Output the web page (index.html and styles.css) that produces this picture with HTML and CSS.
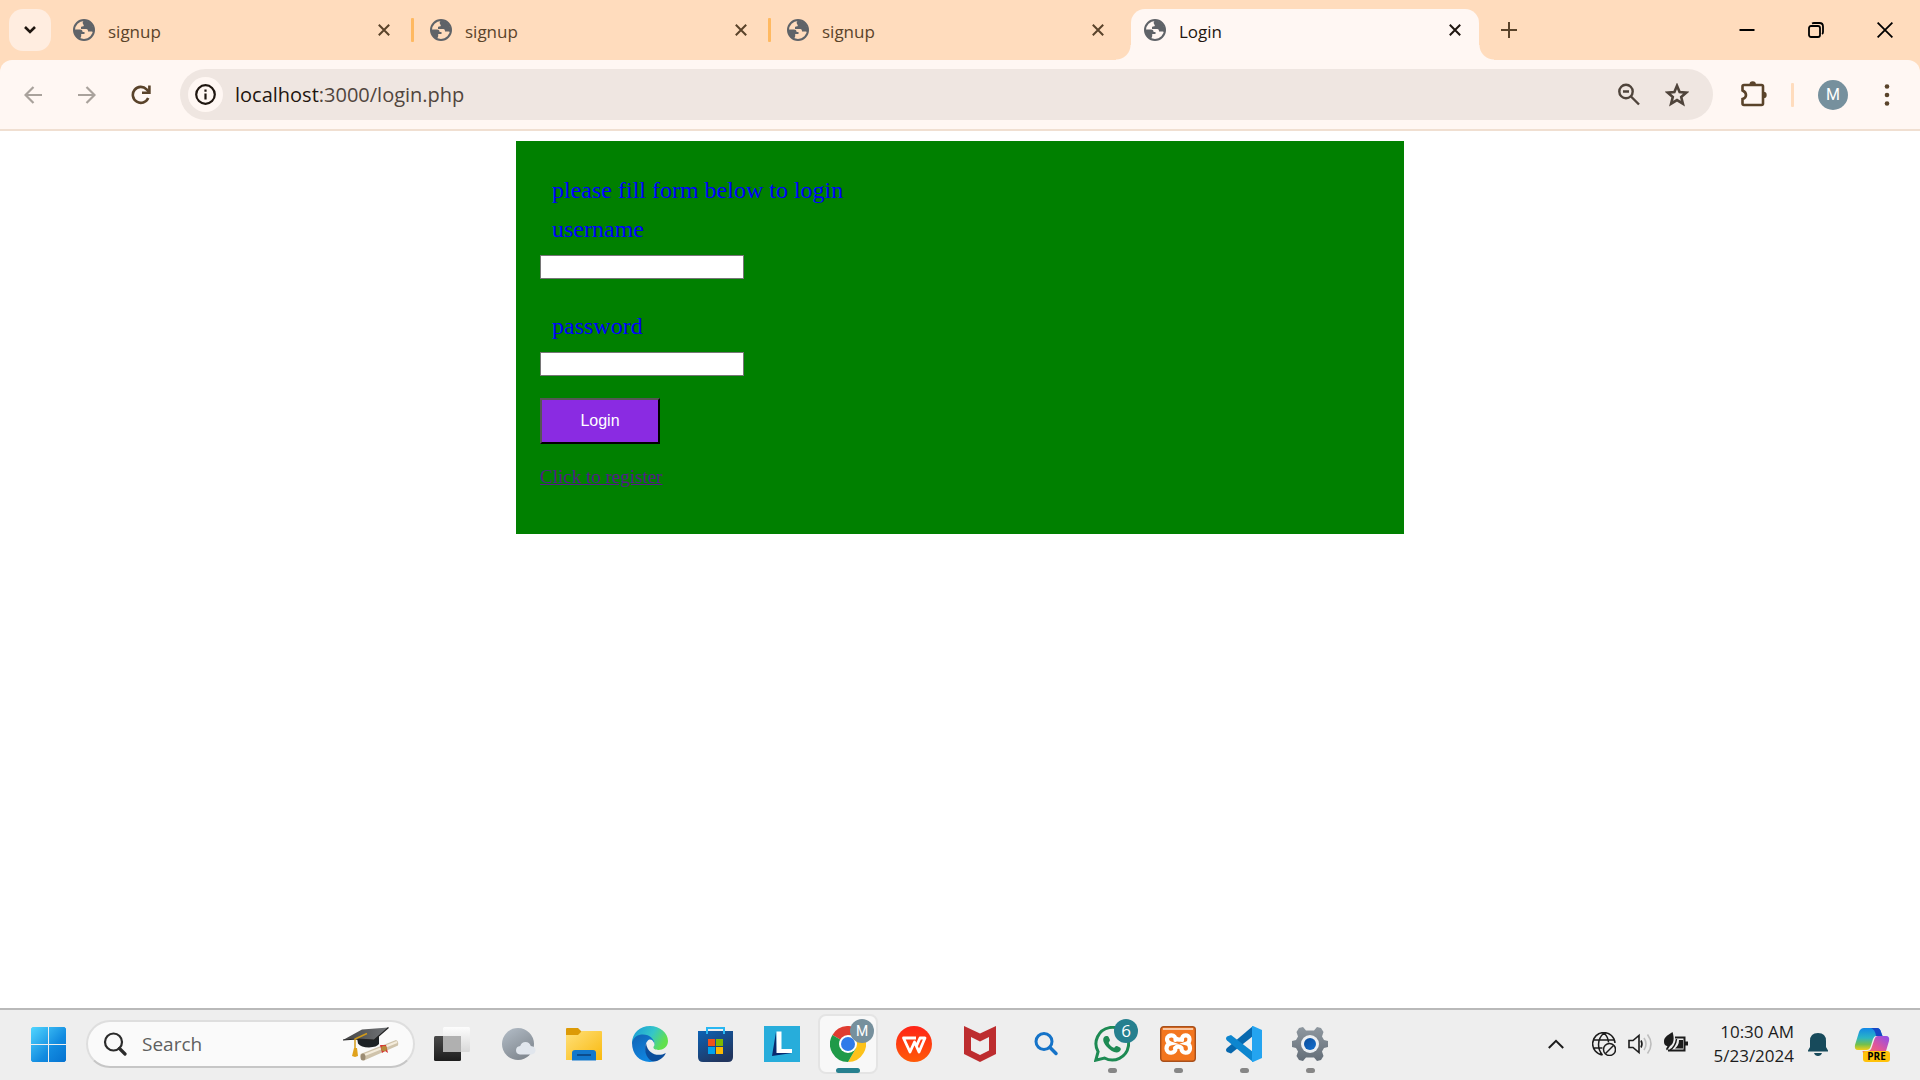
FILE: index.html
```html
<!DOCTYPE html>
<html lang="en">
<head>
<meta charset="utf-8">
<title>Login</title>
<link rel="stylesheet" href="styles.css">
</head>
<body>
<svg width="0" height="0" class="defs" aria-hidden="true">
  <symbol id="globe" viewBox="0 0 22 22">
    <circle cx="11" cy="11" r="10" fill="none" stroke="#5f6368" stroke-width="2"/>
    <path fill="#5f6368" d="M11 1.500c-1 1-1.500 1.500-1.200 3 .2 1 1 1.200 1 2.200 0 1-2.800.3-2.800 1.800v1.600h5.200c1.500 0 1.800 1.400 1.800 2.400h3.500c1 0 1.600.6 1.900 1.300A10 10 0 0 0 11 1.500zM1.500 10.500h5.500c2 0 2.600 1.300 2.600 2.600h1.900v2H8.200v2.100l-1.200 3C3.500 18.500 1.500 15 1.500 10.500z"/>
  </symbol>
  <symbol id="cross" viewBox="0 0 12 12"><path d="M.8.8l10.400 10.400M11.200.8L.8 11.200" stroke="currentColor" stroke-width="2" fill="none"/></symbol>
</svg>

<header class="browser">
  <div class="tabstrip">
    <button class="tab-search" aria-label="Search tabs"><svg width="14" height="10" viewBox="0 0 14 10"><path d="M2 2l5 5 5-5" fill="none" stroke="#1f1610" stroke-width="2.600"/></svg></button>
    <div class="tab">
      <svg class="favicon"><use href="#globe"/></svg><span class="tab-title">signup</span>
      <button class="tab-close" aria-label="Close"><svg width="12" height="12"><use href="#cross"/></svg></button>
    </div>
    <span class="tab-line"></span>
    <div class="tab">
      <svg class="favicon"><use href="#globe"/></svg><span class="tab-title">signup</span>
      <button class="tab-close" aria-label="Close"><svg width="12" height="12"><use href="#cross"/></svg></button>
    </div>
    <span class="tab-line"></span>
    <div class="tab">
      <svg class="favicon"><use href="#globe"/></svg><span class="tab-title">signup</span>
      <button class="tab-close" aria-label="Close"><svg width="12" height="12"><use href="#cross"/></svg></button>
    </div>
    <span class="tab-line hidden"></span>
    <div class="tab active">
      <svg class="favicon"><use href="#globe"/></svg><span class="tab-title">Login</span>
      <button class="tab-close" aria-label="Close"><svg width="12" height="12"><use href="#cross"/></svg></button>
    </div>
    <button class="new-tab" aria-label="New tab"><svg width="16" height="16"><path d="M8 0v16M0 8h16" stroke="#5a432a" stroke-width="2"/></svg></button>
    <div class="window-controls">
      <button aria-label="Minimize"><svg width="16" height="16"><path d="M.5 8h15" stroke="#000" stroke-width="2"/></svg></button>
      <button aria-label="Restore"><svg width="16" height="16" fill="none" stroke="#000" stroke-width="1.800"><rect x="1" y="4" width="11" height="11" rx="2"/><path d="M4 1.500Q5 1 6 1h5.500Q15 1 15 4.500V10q0 1.500-1 2"/></svg></button>
      <button aria-label="Close window"><svg width="16" height="16"><path d="M.6.600l14.800 14.800M15.400.600L.6 15.400" stroke="#000" stroke-width="1.800"/></svg></button>
    </div>
  </div>

  <div class="toolbar-back">
  <div class="toolbar">
    <button class="nav" aria-label="Back"><svg width="18" height="18" fill="none" stroke="#a9a29c" stroke-width="2.200"><path d="M18 9H2M9.500 1L1.500 9l8 8"/></svg></button>
    <button class="nav" aria-label="Forward"><svg width="18" height="18" fill="none" stroke="#a9a29c" stroke-width="2.200"><path d="M0 9h16M8.500 1l8 8-8 8"/></svg></button>
    <button class="nav" aria-label="Reload"><svg width="20" height="20" fill="none" stroke="#5a432a" stroke-width="2.600"><path d="M17.200 13a8 8 0 1 1-1.600-8.700L18 7"/><path d="M18.400.500V7.700H11"/></svg></button>
    <div class="omnibox">
      <button class="site-info" aria-label="Site information"><svg width="22" height="22"><circle cx="10.500" cy="10.500" r="9.300" fill="none" stroke="#1f1610" stroke-width="2.200"/><path d="M10.500 9.500v6M10.500 5.500v2.200" stroke="#1f1610" stroke-width="2.200"/></svg></button>
      <span class="url">localhost<span class="url-path">:3000/login.php</span></span>
      <button aria-label="Zoom"><svg width="24" height="24" fill="none" stroke="#4f443b" stroke-width="2.400"><circle cx="9" cy="8.500" r="6.700"/><path d="M14 13.500l8 8M6 8.500h6"/></svg></button>
      <button aria-label="Bookmark"><svg width="24" height="24" fill="none" stroke="#4f443b" stroke-width="2.600"><path d="M12 2.800l2.600 6.300 6.800.5-5.200 4.400 1.700 6.700-5.900-3.600-5.900 3.600L7.800 14 2.600 9.600l6.800-.5z"/></svg></button>
    </div>
    <button class="extensions" aria-label="Extensions"><svg width="28" height="28"><path d="M4 4h17.500q1.500 0 1.500 1.500v17q0 1.500-1.500 1.500H4q-1.500 0-1.500-1.500V18q3.500-1 3.500-4T2.500 9.500v-4Q2.500 4 4 4z" fill="none" stroke="#5a432a" stroke-width="2.600"/><path d="M9.500 3.500a3.200 3.200 0 0 1 6.400 0zM23.500 10.800a3.200 3.200 0 0 1 0 6.400z" fill="#5a432a"/></svg></button>
    <span class="toolbar-line"></span>
    <button class="avatar" aria-label="Profile">M</button>
    <button class="menu" aria-label="Menu"><svg width="24" height="24" fill="#5a432a"><circle cx="12" cy="3.500" r="2.300"/><circle cx="12" cy="12" r="2.300"/><circle cx="12" cy="20.500" r="2.300"/></svg></button>
  </div>
  </div>
</header>

<main class="page">
  <form class="login">
    <p class="lead">please fill form below to login</p>
    <label class="lead" for="username">username</label>
    <input class="field" id="username" type="text">
    <label class="lead second" for="password">password</label>
    <input class="field" id="password" type="password">
    <button class="submit" type="button">Login</button>
    <a class="register" href="#">Click to register</a>
  </form>
</main>

<footer class="taskbar">
  <button class="start" aria-label="Start"><svg width="35" height="35"><defs><linearGradient id="win" gradientUnits="userSpaceOnUse" x1="0" y1="0" x2="35" y2="35"><stop offset="0" stop-color="#51d6ff"/><stop offset=".6" stop-color="#128be0"/><stop offset="1" stop-color="#0572d0"/></linearGradient></defs><path fill="url(#win)" d="M1.500 0H17v17H0V1.500zM18 0h15.500L35 1.500V17H18zM0 18h17v17H1.500L0 33.500zM18 18h17v15.500L33.500 35H18z"/></svg></button>
  <div class="search">
    <svg width="24" height="24" fill="none" stroke="#2b2b2b"><circle cx="10.500" cy="10" r="8.500" stroke-width="2.200"/><path d="M16.500 16.500l5.500 5.500" stroke-width="3.200" stroke-linecap="round"/></svg>
    <input class="search-box" type="text" aria-label="Search" placeholder="Search">
    <svg width="56" height="36" viewBox="0 0 56 36"><defs><linearGradient id="cap" x1="0" y1="0" x2="1" y2="0"><stop offset="0" stop-color="#444"/><stop offset="1" stop-color="#73767a"/></linearGradient></defs>
      <path fill="#1d2226" d="M14 12l22-4v10q-2 3-10 3.500-8 0-11-4z"/><path fill="url(#cap)" d="M0 14L19 3.500 45.500 1.500 31 14 14 13z"/><path d="M0 14l14-1 17 1.200L45.500 1.500" fill="none" stroke="#222" stroke-width="1.200"/><path d="M24 7.500L12 13v11" fill="none" stroke="#d39b18" stroke-width="1.500"/><path d="M11 22h3l1 8-3 1-3-1z" fill="#e0a21c"/>
      <path d="M17.500 28L53 14q3 1 2 5.500L21 34.500q-4-1-3.500-6.500z" fill="#cfc3ab"/><path d="M19 30l35-14" stroke="#f4ecdc" stroke-width="2"/><ellipse cx="20" cy="31" rx="2.500" ry="3.500" fill="#9b8c74"/><path d="M37 19l6 0 2 8-3-2-3 2z" fill="#d63535"/><circle cx="41" cy="22.500" r="2.800" fill="#b58a3a"/></svg>
  </div>
  <nav class="apps">
    <button class="app" aria-label="Task view"><svg width="36" height="36"><defs><linearGradient id="tv" x1="0" y1="0" x2="0" y2="1"><stop offset="0" stop-color="#4a4a4a"/><stop offset="1" stop-color="#1d1d1d"/></linearGradient><linearGradient id="tw" x1="0" y1="0" x2="0" y2="1"><stop offset="0" stop-color="#fdfdfd"/><stop offset="1" stop-color="#d8d8d8"/></linearGradient></defs><rect x="0" y="10" width="27" height="25" rx="1.500" fill="url(#tv)"/><rect x="9" y="1" width="27" height="25" rx="1.500" fill="url(#tw)"/><path d="M9 10h18v16H9z" fill="#b0b0b0"/></svg></button>
    <button class="app" aria-label="Weather"><svg width="36" height="36"><defs><linearGradient id="wt" x1="0" y1="0" x2=".6" y2="1"><stop offset="0" stop-color="#b4bec8"/><stop offset="1" stop-color="#818890"/></linearGradient></defs><circle cx="18" cy="18" r="16" fill="url(#wt)"/><path d="M20 28.500q-4-.5-4-4.200t4.200-4.300q1.300-4 5.300-4 4 .2 5.300 4 4.700.3 4.700 4.300t-4.500 4.200z" fill="#e1e6ed"/></svg></button>
    <button class="app" aria-label="File Explorer"><svg width="36" height="36"><defs><linearGradient id="fd" x1="0" y1="0" x2="1" y2="1"><stop offset="0" stop-color="#ffe07a"/><stop offset="1" stop-color="#f9b90e"/></linearGradient></defs><path d="M0 3q0-1 1-1h11l4 4H36v6H0z" fill="#dc9a06"/><path d="M0 9h12l4-4h19q1 0 1 1v28H0z" fill="url(#fd)"/><path d="M6 34.500V27q0-3 3-3h18q3 0 3 3v7.500z" fill="#1378cc"/><path d="M11 29h14" stroke="#0c4c8c" stroke-width="2"/></svg></button>
    <button class="app" aria-label="Edge"><svg width="36" height="36"><defs><linearGradient id="e1" x1="0" y1="0" x2="1" y2=".4"><stop offset=".1" stop-color="#1b9fd8"/><stop offset=".6" stop-color="#35c6c8"/><stop offset="1" stop-color="#62e04e"/></linearGradient><linearGradient id="e2" x1="0" y1="0" x2=".5" y2="1"><stop offset="0" stop-color="#1162b4"/><stop offset="1" stop-color="#0f86e0"/></linearGradient></defs><path d="M0 17C0 7 8 0 18 0s18 7 18 15c0 6-5 9-9.500 9-4 0-5.500-1.800-5-3.200C24 18 22 13 17 13z" fill="url(#e1)"/><path d="M0 17c1-6 6-8.500 11-8.500 7 0 12 5 11.500 10.500C22 14 18 12 15.500 15 11 20 14 32 22 35.500 10 38 0 30 0 17z" fill="url(#e2)"/><path d="M14 17c-3 9 2 18 8 18.600 5-.6 10-4 11.800-8.600-7 4-18 2-19.800-10z" fill="#0c4e9c"/></svg></button>
    <button class="app" aria-label="Store"><svg width="36" height="36"><defs><linearGradient id="st" x1="0" y1="0" x2=".6" y2="1"><stop offset="0" stop-color="#0c62b5"/><stop offset="1" stop-color="#21355e"/></linearGradient></defs><path d="M0 5h35v26q0 5-5 5H5q-5 0-5-5z" fill="url(#st)"/><path d="M9 8V2h17v6" fill="none" stroke="#29b7f2" stroke-width="2"/><path fill="#f1511b" d="M10 13h7v7h-7z"/><path fill="#80b900" d="M18 13h7v7h-7z"/><path fill="#00a3ee" d="M10 21h7v7h-7z"/><path fill="#fdb900" d="M18 21h7v7h-7z"/></svg></button>
    <button class="app" aria-label="L app"><svg width="36" height="36"><path fill="#27addb" d="M0 0h36v36H0z"/><path fill="#0a2a6e" d="M12 6L8 30l20-3-15-4z"/><path fill="#fff" d="M12.500 5.500h5V23H28v4H12.500z"/></svg></button>
    <button class="app current" aria-label="Chrome"><svg width="36" height="36"><path d="M18 18L2.400 9A18 18 0 0 1 33.600 9z" fill="#e03c31"/><path d="M18 9h15.600A18 18 0 0 1 18 36l7.800-13.500z" fill="#fcc21b"/><path d="M18 18L2.400 9A18 18 0 0 0 18 36l7.800-13.500z" fill="#1f9a48"/><circle cx="18" cy="18" r="9" fill="#fff"/><circle cx="18" cy="18" r="7" fill="#2f7bea"/></svg><span class="badge gray">M</span><i class="mark wide"></i></button>
    <button class="app" aria-label="WPS Office"><svg width="36" height="36"><defs><linearGradient id="wp" x1="0" y1="0" x2="0" y2="1"><stop offset="0" stop-color="#ff2418"/><stop offset="1" stop-color="#ff5a08"/></linearGradient></defs><circle cx="18" cy="18" r="18" fill="url(#wp)"/><path d="M20 12H7.500L14 26l4.500-10L23 26l6-14h-5l-3.500 8" fill="none" stroke="#fff" stroke-width="2.800" stroke-linejoin="round"/></svg></button>
    <button class="app" aria-label="McAfee"><svg width="36" height="36"><path fill="#bd2d2f" fill-rule="evenodd" d="M2 0l16 7.500L34 0v28l-16 8-16-8zM9 11v13.500l9 4.500 9-4.500V11l-9 4.500z"/></svg></button>
    <button class="app" aria-label="Finder"><svg width="36" height="36" fill="none" stroke="#1573c8"><circle cx="16" cy="15.500" r="8" stroke-width="3"/><path d="M22 21.500l6 6" stroke-width="3.500" stroke-linecap="round"/></svg></button>
    <button class="app" aria-label="WhatsApp"><svg width="36" height="36"><path d="M1.800 34.200l2.300-8.500A16.300 16.300 0 1 1 10.500 32z" fill="none" stroke="#1d8a53" stroke-width="3"/><path d="M12 10c-4 1-3.500 6 .5 10.500S22 28 25.500 25.500c2-1.500 1.500-3.500 0-4.200l-2.500-1.200c-1.500-.5-2 1.400-3 1.700-2-.4-5-3.300-5.300-5 .2-1 1.600-1.800 1.200-3l-1.400-3c-.4-1-1.600-1-2.500-.8z" fill="#1d8a53"/></svg><span class="badge">6</span><i class="mark"></i></button>
    <button class="app" aria-label="XAMPP"><svg width="36" height="36"><rect x=".7" y=".7" width="34.600" height="34.600" rx="3" fill="#f3761f" stroke="#a9501b" stroke-width="1.400"/><path d="M3 2h30v2H3z" fill="#f9c7a2"/><path d="M15.500 14c1-6-8.500-6-8.500-1 0 3 2 4 3.500 4.500C8 18 6.500 20 6.500 22.500c0 6 9.500 5.500 9-.5M22 14c-1-6 7.500-6 7.500-1 0 3-1 4-2.500 4.500C29 18 30 20 30 22.500c0 6-9 5.500-8.500-.5M15 22q3.500-3 6.500 0M16 12.500q3 2 5 .5" fill="none" stroke="#fff" stroke-width="4.200" stroke-linecap="round"/></svg><i class="mark"></i></button>
    <button class="app" aria-label="VS Code"><svg width="36" height="36"><path d="M27 0v10L5 27.500 1 26q-2-2 0-4z" fill="#0768ae"/><path d="M5 9L27 26v10L1 14.500q-2-2 0-4z" fill="#0d86cf"/><path d="M26 0l1 0 9 4v28l-9 4-1 0z" fill="#24a4f0"/></svg><i class="mark"></i></button>
    <button class="app" aria-label="Settings"><svg width="36" height="36"><defs><linearGradient id="gr" x1="0" y1="0" x2="0" y2="1"><stop offset="0" stop-color="#8e979f"/><stop offset="1" stop-color="#646e78"/></linearGradient><linearGradient id="gb" x1="0" y1="0" x2="1" y2="1"><stop offset="0" stop-color="#0a4c9a"/><stop offset="1" stop-color="#1470d0"/></linearGradient></defs><path fill="url(#gr)" d="M7 2l4-1 3 3.500h8L25 1l4 1 2.500 4-1.500 4.500 2 3.500 4 1v6l-4 1-2 3.500 1.500 4.500L29 34l-4 1-3-3.500h-8L11 35l-4-1-2.500-4L6 25.500 4 22l-4-1v-6l4-1 2-3.500L4.500 6z"/><circle cx="18" cy="18" r="9" fill="#eceff2"/><circle cx="18" cy="18" r="6" fill="url(#gb)"/></svg><i class="mark"></i></button>
  </nav>
  <div class="tray">
    <button class="more" aria-label="Hidden icons"><svg width="16" height="10" fill="none" stroke="#1c1c1c" stroke-width="2"><path d="M.8 9L8 1.800 15.200 9"/></svg></button>
    <svg width="24" height="24" fill="none" stroke="#1c1c1c" stroke-width="1.500"><path d="M10.500 22.900A11.200 11.200 0 1 1 23 11M2 8h20M1.500 16h9M12 1c-7 6-7 16-1.500 22M12 1c3 3 4.500 6 4.500 9.500"/><circle cx="17.500" cy="17.500" r="6"/><path d="M13.500 21.500l8-8"/></svg>
    <svg width="24" height="24" fill="none" stroke="#1c1c1c" stroke-width="1.600"><path d="M1 8.500h4l6-5v17l-6-5H1zM13 8.500q2 3.500 0 7"/><path d="M16 6q4 6 0 12M19.500 2.500q7 9.500 0 19" stroke="#bdbdbd"/></svg>
    <svg width="24" height="24"><path d="M11 5.500h9.500v13H4" fill="none" stroke="#1c1c1c" stroke-width="2"/><path d="M21 9.500h3v4h-3zM15 8h4v8.500h-8q4-3 4-8.500z" fill="#1c1c1c"/><path d="M8.500 0C2 4 0 6 0 9.500 0 13 2 14 3.500 14L2 17l1 1.500L6 14c4-2 4.500-8 2.500-14z" fill="#1c1c1c"/><path d="M6 18c5-3 6-7 6.500-11" fill="none" stroke="#1c1c1c" stroke-width="1.500"/></svg>
    <div class="clock"><span>10:30 AM</span><span>5/23/2024</span></div>
    <svg width="20" height="24" fill="#174a5b"><path d="M10 1q8 0 8 8v6l2 3.500v1H0v-1L2 15V9q0-8 8-8zM6 21h8q-1 3-4 3t-4-3z"/></svg>
    <button class="copilot" aria-label="Copilot"><svg width="36" height="36"><defs><linearGradient id="c1" x1="0" y1="0" x2="0" y2="1"><stop offset="0" stop-color="#1287e8"/><stop offset=".45" stop-color="#2bb5c4"/><stop offset=".75" stop-color="#74c04c"/><stop offset="1" stop-color="#f3cf18"/></linearGradient><linearGradient id="c2" x1="1" y1="0" x2="0" y2="1"><stop offset="0" stop-color="#8a4df0"/><stop offset=".5" stop-color="#e0559a"/><stop offset="1" stop-color="#ff7b48"/></linearGradient></defs><path d="M10 2h13q3 0 4 4l1.500 4H22q-2 0-3 3l-2.500 8q-1 3-4 3H4q-4 0-3-5l4-13q1.500-4 5-4z" fill="url(#c1)"/><path d="M17 2h6q3 0 4 4l1.500 4H22q-1-7-5-8z" fill="#1747c6"/><path d="M24 10h8q4 0 3 5l-3 10q-2 4-5 4H13q-4 0-4.500-4h5q3 0 4-3l3-9q1-3 3.500-3z" fill="url(#c2)"/></svg><span class="pre">PRE</span></button>
  </div>
</footer>
</body>
</html>
```
FILE: styles.css
```css
* { box-sizing: border-box; }

body {
  margin: 0;
  min-height: 100vh;
  display: flex;
  flex-direction: column;
  background: #fff;
  font-family: "Open Sans", "Noto Sans", sans-serif;
}

button {
  display: flex;
  align-items: center;
  justify-content: center;
  margin: 0;
  padding: 0;
  border: 0;
  background: none;
  font-family: inherit;
}

svg { display: block; flex: none; }
.defs { position: absolute; }

/* Tab strip */
.tabstrip {
  display: flex;
  align-items: center;
  height: 60px;
  padding-left: 9px;
  background: #ffdcbd;
}
.tab-search {
  width: 42px;
  height: 42px;
  margin-right: 9px;
  border-radius: 14px;
  background: #ffede0;
}
.tab {
  position: relative;
  flex: 0 1 348px;
  display: flex;
  align-items: center;
  align-self: flex-end;
  height: 51px;
  padding: 0 18px 9px 13px;
  color: #5a432a;
}
.favicon { width: 22px; height: 22px; }
.tab-title {
  flex: 1;
  padding: 3px 0 0 13px;
  font-size: 17px;
  line-height: 24px;
}
.tab-close { color: inherit; }
.tab-line {
  width: 3px;
  height: 24px;
  margin: 0 3px;
  border-radius: 1px;
  background: #ffb961;
}
.tab-line.hidden { visibility: hidden; }
.tab.active {
  border-radius: 14px 14px 0 0;
  background: #fff7f3;
  color: #1f1610;
}
.tab.active::before,
.tab.active::after {
  content: "";
  position: absolute;
  bottom: 0;
  width: 15px;
  height: 15px;
}
.tab.active::before {
  left: -15px;
  background: radial-gradient(circle at 0 0, transparent 14px, #fff7f3 15px);
}
.tab.active::after {
  right: -15px;
  background: radial-gradient(circle at 100% 0, transparent 14px, #fff7f3 15px);
}
.new-tab { width: 42px; height: 42px; margin-left: 9px; }
.window-controls { display: flex; margin: 0 1px 0 auto; }
.window-controls button { width: 69px; height: 58px; }

/* Toolbar */
.toolbar-back { background: #ffdcbd; }
.toolbar {
  display: flex;
  align-items: center;
  padding: 9px 21px 9px 6px;
  border-bottom: 2px solid #f0dfd1;
  border-radius: 12px 12px 0 0;
  background: #fff7f3;
}
.nav { width: 54px; height: 42px; }
.omnibox {
  flex: 1;
  display: flex;
  align-items: center;
  gap: 24px;
  height: 51px;
  margin-left: 12px;
  padding: 0 24px 0 8px;
  border-radius: 26px;
  background: #efe6e1;
}
.site-info {
  width: 35px;
  height: 35px;
  margin-right: -12px;
  border-radius: 50%;
  background: #fff7f3;
}
.url { flex: 1; color: #1f1610; font-size: 20px; line-height: 28px; }
.url-path { color: #51453d; }
.extensions { margin-left: 27px; }
.toolbar-line {
  width: 3px;
  height: 24px;
  margin: 0 24px 0 23px;
  border-radius: 1px;
  background: #ffdcbd;
}
.avatar {
  width: 30px;
  height: 30px;
  border-radius: 50%;
  background: #76909d;
  color: #fff;
  font-family: Roboto, sans-serif;
  font-size: 16px;
}
.menu { margin-left: 27px; }

/* Page */
.page { flex: 1; padding: 10px 0; }
.login {
  display: flex;
  flex-direction: column;
  align-items: flex-start;
  width: 46.25%;
  margin: 0 auto;
  padding: 30px 24px 46px;
  background: #008000;
  font-family: "Liberation Serif", serif;
}
.lead {
  margin: 0 12px;
  color: #00f;
  font-size: 24px;
  line-height: 39px;
}
.second { margin-top: 28px; }
.field {
  width: 204px;
  height: 24px;
  margin-top: 6px;
  border: 1px solid #767676;
  background: #fff;
}
.submit {
  width: 120px;
  height: 46px;
  margin: 22px 0;
  border: 2px solid;
  border-color: #555 #000 #000 #555;
  background: #8a2be2;
  color: #fff;
  font-family: "Liberation Sans", sans-serif;
  font-size: 16px;
}
.register { color: #551a8b; font-size: 19px; line-height: 22px; }

/* Taskbar */
.taskbar {
  display: flex;
  align-items: center;
  height: 72px;
  padding: 0 30px 2px 31px;
  border-top: 2px solid #b9b9b9;
  background: #eee;
}
.search {
  display: flex;
  align-items: center;
  width: 329px;
  height: 48px;
  margin: 0 4px 0 20px;
  padding: 0 14px 0 15px;
  border: 2px solid #dedede;
  border-bottom-color: #c6c6c6;
  border-radius: 24px;
  background: #fafafa;
}
.search-box {
  flex: 1;
  min-width: 0;
  padding: 0 0 0 15px;
  border: 0;
  background: none;
  font-family: inherit;
  font-size: 19px;
}
.search-box::placeholder { color: #5f5f5f; }
.apps { display: flex; }
.app {
  position: relative;
  width: 60px;
  height: 60px;
  margin: 0 3px;
  border: 2px solid transparent;
  border-radius: 8px;
}
.app.current { border-color: #e4e4e4; background: #f8f8f8; }
.badge {
  position: absolute;
  top: 3px;
  right: 2px;
  width: 24px;
  height: 24px;
  border-radius: 50%;
  background: #26808f;
  color: #fff;
  font-size: 17px;
  line-height: 24px;
}
.badge.gray { background: #76909d; font-family: Roboto, sans-serif; font-size: 14px; }
.mark {
  position: absolute;
  bottom: -1px;
  left: 50%;
  width: 9px;
  height: 5px;
  margin-left: -4px;
  border-radius: 3px;
  background: #868686;
}
.mark.wide { width: 24px; margin-left: -12px; background: #26808f; }
.tray { display: flex; align-items: center; gap: 12px; margin-left: auto; }
.more { margin-right: 16px; }
.clock {
  display: flex;
  flex-direction: column;
  min-width: 82px;
  margin: 0 2px 0 12px;
  color: #1c1c1c;
  font-size: 17px;
  line-height: 24px;
  text-align: right;
}
.copilot { position: relative; margin-left: 14px; }
.pre {
  position: absolute;
  right: 0;
  bottom: 0;
  width: 27px;
  border-radius: 3px;
  background: #ffc20a;
  color: #000;
  font-size: 10px;
  font-weight: 700;
  line-height: 11px;
}
```
